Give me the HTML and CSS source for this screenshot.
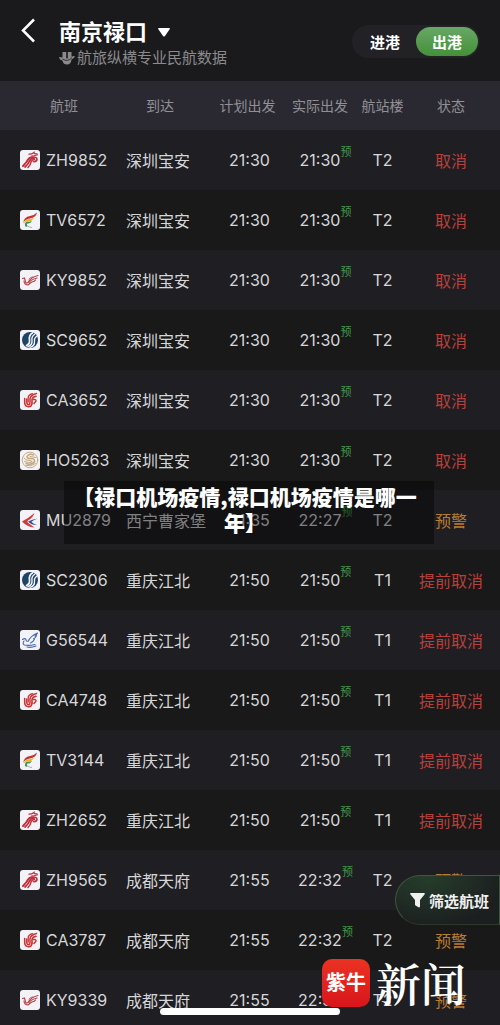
FILE: index.html
```html
<!DOCTYPE html>
<html lang="zh-CN">
<head>
    <meta charset="UTF-8">
    <meta name="viewport" content="width=device-width, initial-scale=1.0">
    <title>南京禄口 - 出港航班</title>
    <link rel="stylesheet" href="styles.css">
</head>
<body>
    <!-- Airline logos -->
    <svg class="sprite" aria-hidden="true">
        <symbol id="zh" viewBox="0 0 20 20">
            <g fill="none" stroke="#c52f3b" stroke-linecap="round">
                <path d="M9 4.200Q12 4.200 14 2.500Q14 4.200 17 3.800" stroke-width="1.300"/>
                <path d="M11.500 6Q14 6 17.500 4.800" stroke-width="1.200"/>
                <path d="M3 16Q7 12 8 9.500Q10 6.500 13.500 7.500" stroke-width="2"/>
                <path d="M5 17Q8.500 14 9.500 11Q11 8 14 8.500" stroke-width="1.800"/>
                <path d="M8 17.500Q10.500 15 11 12Q12 9.500 14.500 9.500" stroke-width="1.500"/>
                <path d="M12.500 7.500Q17 6.500 17 9.500Q16.500 12 13.500 11.500" stroke-width="1.600"/>
            </g>
        </symbol>
        <symbol id="tv" viewBox="0 0 20 20">
            <path d="M3 13Q4 7 10 6Q14 5.500 17 2.500Q16 7.500 10 8.500Q5 9 3 13Z" fill="#c8322e"/>
            <path d="M3.500 14Q5 9.500 9 9.300Q12 9 14 7.500Q12.500 11 9 11.200Q5.500 11.200 3.500 14Z" fill="#e6b422"/>
            <path d="M5 16Q4.500 11.800 8 11.800Q10.500 11.800 12 10.800Q11 13.500 8 13.500Q6 13.800 7.500 16.500Q6 17 5 16Z" fill="#3c9550"/>
            <path d="M7 15.500Q9 17.500 12 17.500" fill="none" stroke="#8fa3b8" stroke-width=".8"/>
        </symbol>
        <symbol id="ky" viewBox="0 0 20 20">
            <g fill="none" stroke="#b5434a" stroke-linecap="round">
                <path d="M2.500 8.500L4.500 8L5.500 12Q7 14.500 9 11Q11 7.500 18 5.500" stroke-width="1.200"/>
                <path d="M9 12.500Q11 9.500 17 8" stroke-width="1.200"/>
                <path d="M4 11Q4.500 15 8 15Q10 13 12 12Q14.500 11.500 15.500 10" stroke-width="1.200"/>
                <path d="M9 9Q10.500 7 13 6.800" stroke-width=".8"/>
            </g>
        </symbol>
        <symbol id="sc" viewBox="0 0 20 20">
            <circle cx="10" cy="10" r="8" fill="#1f4268"/>
            <g fill="none" stroke="#f2f3f7" stroke-linecap="round">
                <path d="M6.500 15.500Q10 14 9.500 10Q8.700 5 12.500 3" stroke-width="1.700"/>
                <path d="M8 16.500Q12.500 15 12 10.500Q11.300 6.500 14.500 4.500" stroke-width="1.400"/>
                <path d="M10 17.300Q15 16 14.500 11Q14 8 16.500 6.500" stroke-width="1.300"/>
            </g>
        </symbol>
        <symbol id="ca" viewBox="0 0 20 20">
            <g fill="none" stroke="#cc3434" stroke-linecap="round">
                <path d="M4.700 8.500V13Q5 16.500 8.500 16.800Q12 16.500 12 13" stroke-width="1.600"/>
                <path d="M6.800 9V12.500Q7 14.700 8.700 14.700Q10 14.500 10 12.500V8.500Q10.500 5.200 16.500 3.500" stroke-width="1.500"/>
                <path d="M8.200 12V8Q8 5 12.500 3.700" stroke-width="1.300"/>
                <path d="M12 13V9.500Q12.500 7 16 6.300" stroke-width="1.600"/>
                <path d="M13.500 9.500Q16.500 9 15.800 11.500L14 13.500" stroke-width="1.500"/>
            </g>
        </symbol>
        <symbol id="ho" viewBox="0 0 20 20">
            <g fill="none" stroke="#c4a67c" stroke-linecap="round">
                <circle cx="10" cy="10" r="7.800" stroke-width=".9"/>
                <path d="M13.500 5Q9 3 7 6.500Q7 9 11 8.500Q15 8.500 14.500 11.500Q12 15.500 6 13.500" stroke-width="1.500"/>
                <path d="M4 8Q5 10.500 9 10.500Q12.500 10.500 12 12Q9.500 13.500 4.500 11.500M10 6.500L16 7.500M6 15.500Q11 17 15.500 13.500" stroke-width="1"/>
            </g>
        </symbol>
        <symbol id="mu" viewBox="0 0 20 20">
            <path d="M2 11.500Q8 8.500 14.500 3Q13 7.500 8 10.500Q6.500 12 9 13.500L14.500 17.500Q7 17 2 11.500Z" fill="#d33b3d"/>
            <path d="M8 11.500Q12 9.500 17.500 8.500Q13 10.500 11.500 11.800Q12.500 13.500 17 15Q11 15 8 11.500Z" fill="#31549a"/>
        </symbol>
        <symbol id="g5" viewBox="0 0 20 20">
            <g fill="none" stroke="#4668b8" stroke-linecap="round" stroke-linejoin="round">
                <path d="M2.500 9.500Q5 7.800 6 9.500Q6 12 8.500 11Q10 6.500 17.500 3Q16.500 5 15 6Q16 6 16.500 5.800Q15 8.500 13.500 8.800Q14 9.500 14.500 9.200Q13 12 10.500 13" stroke-width="1.100"/>
                <path d="M4 11Q2 14 4.500 15Q9 16 15 14.500M7 17Q11 18 16 16" stroke-width="1.100"/>
            </g>
        </symbol>
    </svg>

    <div class="app">
        <header class="topbar">
            <button class="back" type="button" aria-label="返回">
                <svg width="16" height="26" viewBox="0 0 16 26"><path d="M14 2.500L3 13.500L14 24.500" fill="none" stroke="#fff" stroke-width="2.500"/></svg>
            </button>
            <div class="heading">
                <button class="airport" type="button">
                    <span>南京禄口</span>
                    <svg width="12" height="9" viewBox="0 0 12 9"><path d="M1 0H11Q12.500 0 11.500 1.500L7 8Q6 9 5 8L.5 1.500Q-.5 0 1 0Z" fill="#fff"/></svg>
                </button>
                <p class="source">
                    <svg width="16" height="14" viewBox="0 0 16 14"><path d="M3.500 1H7.200V7Q8 8 8.800 7V1H12.500V5.500L16 5Q15 8 12.500 8.500Q12 13.500 8 13.500Q4 13.500 3.500 9.500Q.5 9 0 6L3.500 6.500Z" fill="#8b8b8e"/><path d="M3.500 8Q9 11.500 13 6.500" fill="none" stroke="#1a1a1c" stroke-width=".8"/></svg>
                    <span>航旅纵横专业民航数据</span>
                </p>
            </div>
            <div class="switch">
                <button class="switch-item" type="button">进港</button>
                <button class="switch-item active" type="button">出港</button>
            </div>
        </header>

        <main class="board">
            <table class="flights">
                <thead>
                    <tr>
                        <th class="flight">航班</th>
                        <th class="city">到达</th>
                        <th class="plan">计划出发</th>
                        <th class="actual">实际出发</th>
                        <th class="terminal">航站楼</th>
                        <th class="status">状态</th>
                    </tr>
                </thead>
                <tbody>
                    <tr>
                        <td><span class="code"><svg class="logo"><use href="#zh"/></svg>ZH9852</span></td>
                        <td class="city">深圳宝安</td>
                        <td class="plan">21:30</td>
                        <td><span class="time">21:30<sup>预</sup></span></td>
                        <td>T2</td>
                        <td class="status cancel">取消</td>
                    </tr>
                    <tr>
                        <td><span class="code"><svg class="logo"><use href="#tv"/></svg>TV6572</span></td>
                        <td class="city">深圳宝安</td>
                        <td class="plan">21:30</td>
                        <td><span class="time">21:30<sup>预</sup></span></td>
                        <td>T2</td>
                        <td class="status cancel">取消</td>
                    </tr>
                    <tr>
                        <td><span class="code"><svg class="logo"><use href="#ky"/></svg>KY9852</span></td>
                        <td class="city">深圳宝安</td>
                        <td class="plan">21:30</td>
                        <td><span class="time">21:30<sup>预</sup></span></td>
                        <td>T2</td>
                        <td class="status cancel">取消</td>
                    </tr>
                    <tr>
                        <td><span class="code"><svg class="logo"><use href="#sc"/></svg>SC9652</span></td>
                        <td class="city">深圳宝安</td>
                        <td class="plan">21:30</td>
                        <td><span class="time">21:30<sup>预</sup></span></td>
                        <td>T2</td>
                        <td class="status cancel">取消</td>
                    </tr>
                    <tr>
                        <td><span class="code"><svg class="logo"><use href="#ca"/></svg>CA3652</span></td>
                        <td class="city">深圳宝安</td>
                        <td class="plan">21:30</td>
                        <td><span class="time">21:30<sup>预</sup></span></td>
                        <td>T2</td>
                        <td class="status cancel">取消</td>
                    </tr>
                    <tr>
                        <td><span class="code"><svg class="logo"><use href="#ho"/></svg>HO5263</span></td>
                        <td class="city">深圳宝安</td>
                        <td class="plan">21:30</td>
                        <td><span class="time">21:30<sup>预</sup></span></td>
                        <td>T2</td>
                        <td class="status cancel">取消</td>
                    </tr>
                    <tr>
                        <td><span class="code"><svg class="logo"><use href="#mu"/></svg>MU2879</span></td>
                        <td class="city">西宁曹家堡</td>
                        <td class="plan">21:35</td>
                        <td><span class="time">22:27<sup>预</sup></span></td>
                        <td>T2</td>
                        <td class="status warn">预警</td>
                    </tr>
                    <tr>
                        <td><span class="code"><svg class="logo"><use href="#sc"/></svg>SC2306</span></td>
                        <td class="city">重庆江北</td>
                        <td class="plan">21:50</td>
                        <td><span class="time">21:50<sup>预</sup></span></td>
                        <td>T1</td>
                        <td class="status cancel">提前取消</td>
                    </tr>
                    <tr>
                        <td><span class="code"><svg class="logo"><use href="#g5"/></svg>G56544</span></td>
                        <td class="city">重庆江北</td>
                        <td class="plan">21:50</td>
                        <td><span class="time">21:50<sup>预</sup></span></td>
                        <td>T1</td>
                        <td class="status cancel">提前取消</td>
                    </tr>
                    <tr>
                        <td><span class="code"><svg class="logo"><use href="#ca"/></svg>CA4748</span></td>
                        <td class="city">重庆江北</td>
                        <td class="plan">21:50</td>
                        <td><span class="time">21:50<sup>预</sup></span></td>
                        <td>T1</td>
                        <td class="status cancel">提前取消</td>
                    </tr>
                    <tr>
                        <td><span class="code"><svg class="logo"><use href="#tv"/></svg>TV3144</span></td>
                        <td class="city">重庆江北</td>
                        <td class="plan">21:50</td>
                        <td><span class="time">21:50<sup>预</sup></span></td>
                        <td>T1</td>
                        <td class="status cancel">提前取消</td>
                    </tr>
                    <tr>
                        <td><span class="code"><svg class="logo"><use href="#zh"/></svg>ZH2652</span></td>
                        <td class="city">重庆江北</td>
                        <td class="plan">21:50</td>
                        <td><span class="time">21:50<sup>预</sup></span></td>
                        <td>T1</td>
                        <td class="status cancel">提前取消</td>
                    </tr>
                    <tr>
                        <td><span class="code"><svg class="logo"><use href="#zh"/></svg>ZH9565</span></td>
                        <td class="city">成都天府</td>
                        <td class="plan">21:55</td>
                        <td><span class="time">22:32<sup>预</sup></span></td>
                        <td>T2</td>
                        <td class="status warn">预警</td>
                    </tr>
                    <tr>
                        <td><span class="code"><svg class="logo"><use href="#ca"/></svg>CA3787</span></td>
                        <td class="city">成都天府</td>
                        <td class="plan">21:55</td>
                        <td><span class="time">22:32<sup>预</sup></span></td>
                        <td>T2</td>
                        <td class="status warn">预警</td>
                    </tr>
                    <tr>
                        <td><span class="code"><svg class="logo"><use href="#ky"/></svg>KY9339</span></td>
                        <td class="city">成都天府</td>
                        <td class="plan">21:55</td>
                        <td><span class="time">22:32</span></td>
                        <td>T2</td>
                        <td class="status warn">预警</td>
                    </tr>
                </tbody>
            </table>
        </main>

        <h1 class="caption">【禄口机场疫情,禄口机场疫情是哪一年】</h1>

        <button class="filter" type="button">
            <svg width="15" height="15" viewBox="0 0 15 15"><path d="M1 0H14Q15.500 0 14.500 1.500L10 7V13.500Q9.500 15 8.500 14.300L5.500 12.500Q5 12 5 11.500V7L.5 1.500Q-.5 0 1 0Z" fill="#f0f0f0"/></svg>
            筛选航班
        </button>

        <div class="home-bar"></div>

        <div class="watermark">
            <span class="badge">紫牛</span>
            <span class="brand">新闻</span>
        </div>
    </div>
</body>
</html>
```
FILE: styles.css
```css
* {
    margin: 0;
    padding: 0;
    box-sizing: border-box;
}

body {
    background-color: #1a1a1c;
    color: #d6d6d8;
    font-family: Inter, "Noto Sans CJK SC", sans-serif;
    font-size: 16px;
}

button {
    background: none;
    border: none;
    color: #fff;
    font-family: inherit;
    cursor: pointer;
}

svg {
    display: block;
    flex-shrink: 0;
}

.sprite {
    position: absolute;
    width: 0;
    height: 0;
}

.app {
    position: relative;
    display: flex;
    flex-direction: column;
    height: 100vh;
    overflow: hidden;
}

/* Top bar */
.topbar {
    display: flex;
    align-items: flex-start;
    padding: 17px 20px 12px;
    flex-shrink: 0;
}

.back {
    width: 39px;
}

.heading {
    flex: 1;
}

.airport {
    display: flex;
    align-items: center;
    gap: 11px;
    font-size: 22px;
    font-weight: 700;
    line-height: 30px;
}

.source {
    display: flex;
    align-items: center;
    gap: 2px;
    color: #8b8b8e;
    font-size: 15px;
    line-height: 22px;
}

.switch {
    display: flex;
    margin-top: 8px;
    padding: 2px;
    border-radius: 17px;
    background-color: #222126;
}

.switch-item {
    width: 62px;
    height: 29px;
    border-radius: 15px;
    font-size: 15px;
    font-weight: 700;
}

.switch-item.active {
    background: linear-gradient(#68a866, #449039);
}

/* Flight table */
.board {
    flex: 1;
    min-height: 0;
    overflow: hidden;
}

.flights {
    width: 100%;
    table-layout: fixed;
    border-collapse: collapse;
    text-align: center;
}

.flights th {
    height: 49px;
    padding-bottom: 2px;
    background-color: #2a2932;
    color: #909094;
    font-size: 14px;
    font-weight: 400;
}

.flights td {
    height: 60px;
    padding-bottom: 1px;
}

.flights tbody tr {
    background-color: #19191a;
}

.flights tbody tr:nth-child(odd) {
    background-color: #1f1e23;
}

th.flight {
    width: 22%;
    padding-left: 18px;
}

th.city {
    width: 20%;
}

th.plan {
    width: 15%;
}

th.actual {
    width: 14%;
}

th.terminal {
    width: 11%;
}

th.status {
    width: 18%;
}

.status {
    padding-right: 8px;
}

td.city {
    padding-left: 16px;
    text-align: left;
    white-space: nowrap;
}

td.plan {
    padding-left: 4px;
}

.code {
    display: flex;
    align-items: center;
    gap: 6px;
    padding-left: 20px;
}

.logo {
    width: 20px;
    height: 20px;
    border-radius: 3px;
    background-color: #f2f2f7;
}

.time {
    position: relative;
}

.time sup {
    position: absolute;
    left: 100%;
    top: -6px;
    color: #43964a;
    font-size: 11px;
    line-height: 16px;
}

.cancel {
    color: #b9403a;
}

.warn {
    color: #b97c33;
}

/* Overlays */
.caption {
    position: absolute;
    top: 481px;
    left: 64px;
    right: 66px;
    padding: 2px 14px 9px 6px;
    background-color: rgba(0, 0, 0, 0.4);
    color: #fff;
    font-family: "Noto Sans CJK SC", sans-serif;
    font-size: 21px;
    font-weight: 900;
    line-height: 26px;
    text-align: center;
}

.filter {
    position: absolute;
    right: 0;
    bottom: 100px;
    display: flex;
    align-items: center;
    gap: 4px;
    height: 50px;
    padding: 0 10px 0 14px;
    border: 1px solid #3b5a3d;
    border-bottom-color: #2b382c;
    border-radius: 25px 0 0 25px;
    background: radial-gradient(ellipse at 30% 0, #263e2b, #1c1f20 75%);
    color: #f0f0f0;
    font-size: 15px;
    font-weight: 700;
}

.home-bar {
    position: absolute;
    left: 50%;
    bottom: 10px;
    width: 36%;
    height: 7px;
    border-radius: 4px;
    background-color: #fff;
    transform: translateX(-50%);
}

.watermark {
    position: absolute;
    right: 34px;
    bottom: 18px;
    display: flex;
    align-items: center;
    gap: 6px;
    color: #fff;
}

.badge {
    width: 48px;
    border-radius: 10px;
    background: linear-gradient(#ea3323, #d8151b);
    font-size: 20px;
    font-weight: 700;
    line-height: 48px;
    text-align: center;
}

.brand {
    font-family: "Noto Serif CJK SC", "Noto Sans CJK SC", serif;
    font-size: 45px;
    font-weight: 600;
    line-height: 48px;
}
```
